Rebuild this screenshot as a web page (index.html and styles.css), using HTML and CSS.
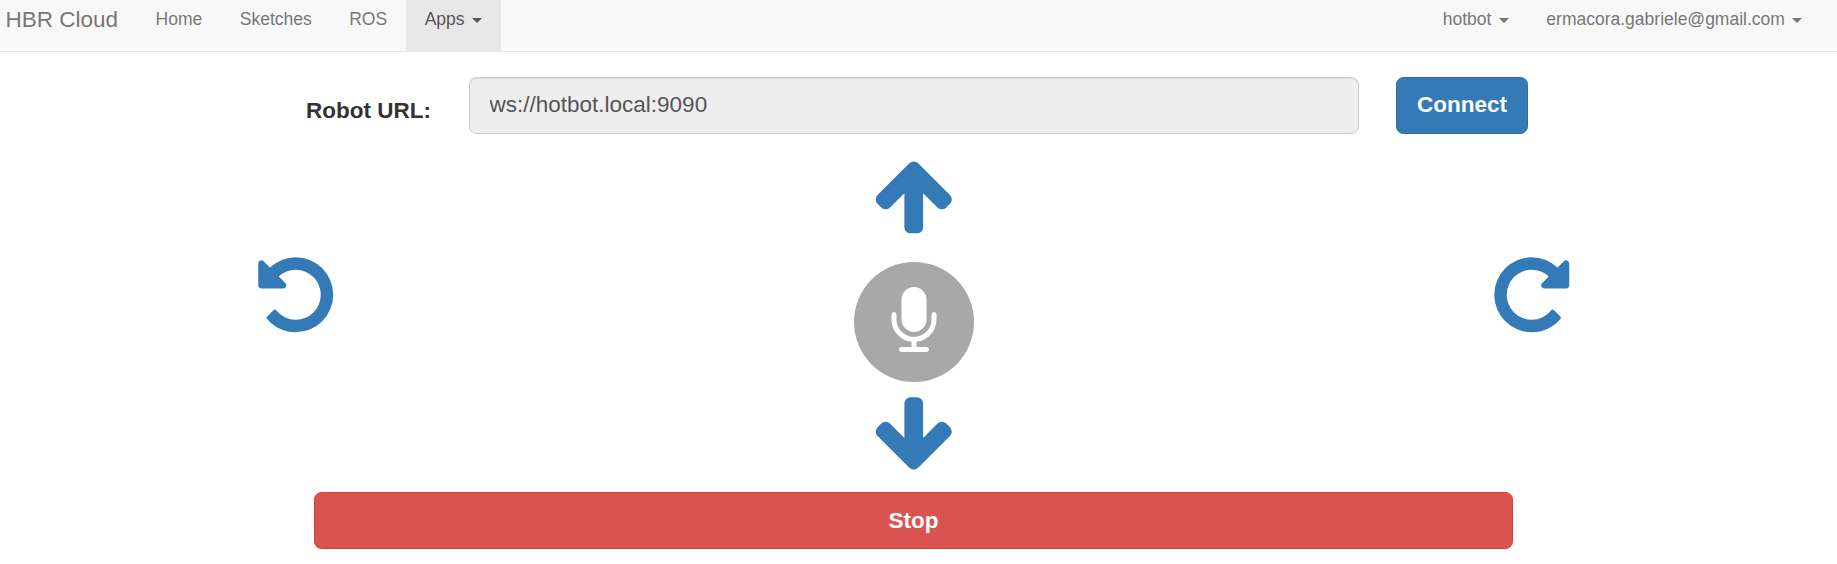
FILE: index.html
```html
<!DOCTYPE html>
<html lang="en">
<head>
<meta charset="utf-8">
<title>HBR Cloud</title>
<link rel="stylesheet" href="styles.css">
</head>
<body>
<nav class="navbar">
  <a class="brand">HBR Cloud</a>
  <ul class="nav">
    <li><a>Home</a></li>
    <li><a>Sketches</a></li>
    <li><a>ROS</a></li>
    <li class="active"><a>Apps <span class="caret"></span></a></li>
  </ul>
  <ul class="nav nav-right">
    <li><a>hotbot <span class="caret"></span></a></li>
    <li><a>ermacora.gabriele@gmail.com <span class="caret"></span></a></li>
  </ul>
</nav>
<main>
  <form class="connection">
    <label for="url">Robot URL:</label>
    <input id="url" class="url" type="text" value="ws://hotbot.local:9090" readonly>
    <button class="btn btn-primary" type="button">Connect</button>
  </form>
  <section class="controls">
    <svg class="icon turn" viewBox="0 0 1792 1792"><path d="M1664 896q0 156-61 298t-164 245-245 164-298 61q-172 0-327-72.5t-264-204.5q-7-10-6.5-22.5t8.5-20.5l137-138q10-9 25-9 16 2 23 12 73 95 179 147t225 52q104 0 198.5-40.5t163.5-109.5 109.5-163.5 40.5-198.5-40.5-198.5-109.5-163.5-163.5-109.5-198.5-40.5q-98 0-188 35.5t-160 101.5l137 138q31 30 14 69-17 40-59 40h-448q-26 0-45-19t-19-45v-448q0-42 40-59 39-17 69 14l130 129q107-101 244.5-156.5t284.5-55.5q156 0 298 61t245 164 164 245 61 298z"/></svg>
    <div class="center">
      <svg class="icon" viewBox="0 0 1792 1792"><path d="M1675 971q0 51-37 90l-75 75q-38 38-91 38-54 0-90-38l-294-293v704q0 52-37.5 84.5t-90.5 32.5h-128q-53 0-90.5-32.5t-37.5-84.5v-704l-294 293q-36 38-90 38t-90-38l-75-75q-38-38-38-90 0-53 38-91l651-651q35-37 90-37 54 0 91 37l651 651q37 39 37 91z"/></svg>
      <div class="mic">
        <svg viewBox="0 0 1792 1792"><path d="M1472 704v128q0 221-147.5 384.5t-364.5 187.5v132h256q26 0 45 19t19 45-19 45-45 19h-640q-26 0-45-19t-19-45 19-45 45-19h256v-132q-217-24-364.5-187.5t-147.5-384.5v-128q0-26 19-45t45-19 45 19 19 45v128q0 185 131.5 316.5t316.5 131.5 316.5-131.5 131.5-316.5v-128q0-26 19-45t45-19 45 19 19 45zm-256-384v512q0 132-94 226t-226 94-226-94-94-226v-512q0-132 94-226t226-94 226 94 94 226z"/></svg>
      </div>
      <svg class="icon" viewBox="0 0 1792 1792"><path d="M1675 832q0 53-37 90l-651 652q-39 37-91 37-53 0-90-37l-651-652q-38-36-38-90 0-53 38-91l74-75q39-37 91-37 53 0 90 37l294 294v-704q0-52 38-90t90-38h128q52 0 90 38t38 90v704l294-294q37-37 90-37 52 0 91 37l75 75q37 39 37 91z"/></svg>
    </div>
    <svg class="icon turn mirrored" viewBox="0 0 1792 1792"><path d="M1664 896q0 156-61 298t-164 245-245 164-298 61q-172 0-327-72.5t-264-204.5q-7-10-6.5-22.5t8.5-20.5l137-138q10-9 25-9 16 2 23 12 73 95 179 147t225 52q104 0 198.5-40.5t163.5-109.5 109.5-163.5 40.5-198.5-40.5-198.5-109.5-163.5-163.5-109.5-198.5-40.5q-98 0-188 35.5t-160 101.5l137 138q31 30 14 69-17 40-59 40h-448q-26 0-45-19t-19-45v-448q0-42 40-59 39-17 69 14l130 129q107-101 244.5-156.5t284.5-55.5q156 0 298 61t245 164 164 245 61 298z"/></svg>
  </section>
  <button class="btn btn-danger" type="button">Stop</button>
</main>
</body>
</html>
```
FILE: styles.css
```css
* {
  box-sizing: border-box;
}

body {
  margin: 0;
  background: #fff;
  color: #333;
  font: 17.5px/25px "Liberation Sans", Arial, sans-serif;
  overflow: hidden;
}

.navbar {
  display: flex;
  height: 52px;
  padding: 0 16px 0 5.5px;
  background: #f8f8f8;
  border-bottom: 1px solid #e7e7e7;
  color: #777;
}

.brand {
  padding: 7px 18.75px 0 0;
  font-size: 22.5px;
}

.nav {
  display: flex;
  margin: 0;
  padding: 0;
  list-style: none;
}

.nav li {
  padding: 6.75px 18.75px 0;
  white-space: nowrap;
}

.nav .active {
  background: #e7e7e7;
  color: #555;
}

.nav-right {
  margin-left: auto;
}

.caret {
  display: inline-block;
  margin-left: 2.5px;
  vertical-align: middle;
  border-top: 5px solid;
  border-left: 5px solid transparent;
  border-right: 5px solid transparent;
}

.connection {
  display: flex;
  height: 57px;
  margin: 25px 0 0 306px;
}

label {
  width: 163px;
  padding-top: 21px;
  font-size: 22.5px;
  font-weight: bold;
}

.url {
  width: 890px;
  margin-right: 37px;
  padding: 0 19.5px 2px;
  background: #eee;
  border: 1px solid #ccc;
  border-radius: 7.5px;
  box-shadow: inset 0 1px 1px rgba(0, 0, 0, .075);
  color: #555;
  font: 22.5px "Liberation Sans", Arial, sans-serif;
}

.btn {
  height: 57px;
  padding: 0 0 2px;
  border: 1px solid;
  border-radius: 7.5px;
  color: #fff;
  font: bold 22.5px "Liberation Sans", Arial, sans-serif;
}

.btn-primary {
  width: 132px;
  background: #337ab7;
  border-color: #2e6da4;
}

.btn-danger {
  display: block;
  width: 1199px;
  margin-left: 314px;
  padding-bottom: 0;
  background: #d9534f;
  border-color: #d43f3a;
}

.controls {
  display: flex;
  justify-content: space-between;
  width: 1323.75px;
  height: 358px;
  margin-left: 251.75px;
}

.icon {
  display: block;
  width: 87.5px;
  height: 87.5px;
  fill: #337ab7;
}

.turn {
  margin-top: 116.75px;
}

.mirrored {
  transform: scaleX(-1);
}

.center {
  display: flex;
  flex-direction: column;
  align-items: center;
  padding-top: 17.75px;
}

.mic {
  display: flex;
  justify-content: center;
  width: 120px;
  height: 120px;
  margin: 22.75px 0 8.75px;
  padding-top: 25px;
  border-radius: 50%;
  background: #a8a8a8;
}

.mic svg {
  width: 70px;
  height: 70px;
  fill: #fff;
}
```
